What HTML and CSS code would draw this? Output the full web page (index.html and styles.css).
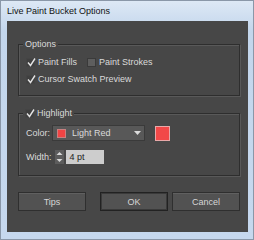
FILE: index.html
```html
<!DOCTYPE html>
<html lang="en">

<head>
    <meta charset="UTF-8">
    <title>Live Paint Bucket Options</title>
    <link rel="stylesheet" href="styles.css">
</head>

<body>

    <div class="window">
        <div class="titlebar">Live Paint Bucket Options</div>

        <div class="client">
            <!-- Options group -->
            <div class="group options">
                <span class="legend">Options</span>
                <div class="row">
                    <label class="check">
                        <span class="box"><svg width="9" height="9" viewBox="0 0 9 9"><path d="M1 4.5 L3.5 7.5 L8 0.5" /></svg></span>
                        Paint Fills
                    </label>
                    <label class="check">
                        <span class="box off"></span>
                        Paint Strokes
                    </label>
                </div>
                <div class="row second">
                    <label class="check">
                        <span class="box"><svg width="9" height="9" viewBox="0 0 9 9"><path d="M1 4.5 L3.5 7.5 L8 0.5" /></svg></span>
                        Cursor Swatch Preview
                    </label>
                </div>
            </div>

            <!-- Highlight group -->
            <div class="group highlight">
                <span class="legend">
                    <label class="check">
                        <span class="box"><svg width="9" height="9" viewBox="0 0 9 9"><path d="M1 4.5 L3.5 7.5 L8 0.5" /></svg></span>
                        Highlight
                    </label>
                </span>
                <div class="field">
                    <span class="field-label">Color:</span>
                    <div class="select">
                        <span class="swatch"></span>
                        <span class="select-text">Light Red</span>
                        <svg class="arrow" width="7" height="4" viewBox="0 0 7 4"><path d="M0 0 H7 L3.5 4 Z" /></svg>
                    </div>
                    <span class="big-swatch"></span>
                </div>
                <div class="field width">
                    <span class="field-label">Width:</span>
                    <span class="spin">
                        <svg width="9" height="14" viewBox="0 0 9 14">
                            <path d="M1.5 5 L4.5 2 L7.5 5 Z" />
                            <path d="M1.5 9 L4.5 12 L7.5 9 Z" />
                        </svg>
                    </span>
                    <span class="input">4 pt</span>
                </div>
            </div>

            <div class="buttons">
                <button class="btn">Tips</button>
                <button class="btn default">OK</button>
                <button class="btn">Cancel</button>
            </div>
        </div>
    </div>

</body>

</html>
```

FILE: styles.css
```css
html,
body {
    margin: 0;
    padding: 0;
}

body {
    font-family: "Liberation Sans", Arial, sans-serif;
    font-size: 9px;
    background: #c6d8ed;
}

.window {
    width: 254px;
    height: 240px;
    box-sizing: border-box;
    display: flex;
    flex-direction: column;
    border: 1px solid #8a97a8;
    background: linear-gradient(#dde8f5, #c3d6ec 30px, #c6d8ee);
}

.titlebar {
    height: 20px;
    line-height: 20px;
    padding-left: 6px;
    color: #111;
}

.client {
    flex: 1;
    margin: 0 5px 7px 6px;
    padding: 23px 8px 0 11px;
    background: #474747;
    display: flex;
    flex-direction: column;
    color: #dadada;
}

/* etched group box */
.group {
    display: flex;
    flex-direction: column;
    align-items: flex-start;
    border: 1px solid #2e2e2e;
    box-shadow: inset 1px 1px 0 #595959, 1px 1px 0 #595959;
    padding: 0 8px 8px 7px;
}

.legend {
    margin: -7px 0 0 -3px;
    padding: 0 2px;
    line-height: 13px;
    background: #474747;
}

.row {
    display: flex;
    align-items: center;
    height: 16px;
    margin-top: 3px;
}

.row.second {
    margin-top: 1px;
}

.check {
    display: flex;
    align-items: center;
    margin-right: 10px;
}

.legend .check {
    margin-right: 0;
}

.box {
    width: 9px;
    height: 9px;
    margin-right: 3px;
    background: #3f3f3f;
    border: 1px solid #444;
    box-sizing: border-box;
    position: relative;
}

.box svg {
    position: absolute;
    left: -0.5px;
    top: -1px;
}

.box path {
    fill: none;
    stroke: #e4e4e4;
    stroke-width: 1.4;
}

.box.off {
    background: #5e5e5e;
    border-color: #3a3a3a;
}

.highlight {
    margin-top: 17px;
    padding-bottom: 9px;
}

.field {
    display: flex;
    align-items: center;
    height: 18px;
    margin-top: 4px;
}

.field.width {
    margin-top: 6px;
}

.field-label {
    margin-right: 2px;
}

.select {
    width: 93px;
    height: 16px;
    box-sizing: border-box;
    display: flex;
    align-items: center;
    background: #585858;
    border: 1px solid #3a3a3a;
    padding: 0 3px 0 4px;
}

.swatch {
    width: 9px;
    height: 9px;
    box-sizing: border-box;
    background: #f04444;
    border: 1px solid #c98080;
}

.select-text {
    flex: 1;
    margin-left: 6px;
}

.arrow path {
    fill: #dcdcdc;
}

.big-swatch {
    width: 15px;
    height: 15px;
    margin-left: 10px;
    box-sizing: border-box;
    background: #f24848;
    border: 1px solid #e8a8a8;
}

.spin {
    width: 9px;
    height: 14px;
    margin-left: 1px;
    background: #5c5c5c;
}

.spin path {
    fill: #d8d8d8;
}

.input {
    width: 38px;
    height: 14px;
    line-height: 14px;
    margin-left: 2px;
    padding-left: 4px;
    box-sizing: border-box;
    background: #cdcdcd;
    color: #222;
}

.buttons {
    display: flex;
    margin-top: 16px;
}

.btn {
    width: 68px;
    height: 19px;
    padding: 0;
    font: inherit;
    color: #d6d6d6;
    background: #525252;
    border: 1px solid #2f2f2f;
    box-shadow: inset 0 1px 0 #606060;
}

.btn.default {
    margin-left: auto;
    margin-right: 4px;
    border-color: #222;
    box-shadow: inset 0 0 0 1px #3a3a3a;
}
```
